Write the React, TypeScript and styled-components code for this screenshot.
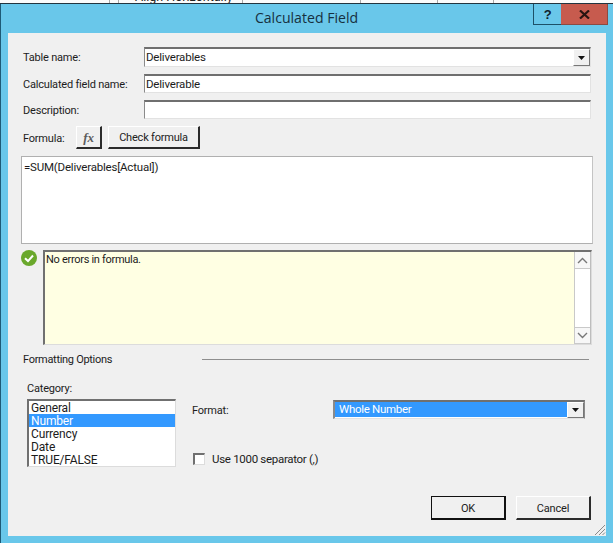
import React from "react";
import styled, { createGlobalStyle } from "styled-components";

const Global = createGlobalStyle`
  html, body { margin: 0; padding: 0; background: #69c7ea; }
  * { box-sizing: border-box; }
  #root { width: 613px; height: 543px; overflow: hidden; }
`;
const Page = styled.div`
  width: 613px; height: 543px; display: flex; flex-direction: column;
  font-family: Roboto, "Liberation Sans", Arial, sans-serif; font-size: 11px; letter-spacing: -0.2px; color: #1c1c1c;
  background: #69c7ea; overflow: hidden;
`;
const BehindStrip = styled.div`
  height: 4px; flex: none; display: flex; overflow: hidden; background: #fbfbfb;
  border-bottom: 1px solid #22343f;
`;
const BehindCell = styled.div<{ $w: number; $line?: boolean }>`
  width: ${(p) => p.$w}px; flex: none; height: 3px; overflow: hidden;
  border-right: ${(p) => (p.$line ? "1px solid #a8a8a8" : "none")};
`;
const BehindText = styled.div`
  font-size: 12.5px; letter-spacing: 0; line-height: 12px; margin-top: -9px; color: #222; white-space: nowrap; padding-left: 2px;
`;
const Frame = styled.div`
  flex: 1; display: flex; flex-direction: column;
  border-left: 1px solid #1e5a76;
  padding: 0 7px 7px 7px;
`;
const TitleBar = styled.div`
  height: 29px; flex: none; display: grid; grid-template-columns: 1fr auto 1fr; margin: 0 -2px 0 0;
`;
const Title = styled.div`
  grid-column: 2; font-family: "Open Sans", sans-serif; font-size: 14.1px; letter-spacing: 0; line-height: 28px; color: #16303f; padding-right: 3px;
`;
const Controls = styled.div`
  grid-column: 3; display: flex; justify-content: flex-end; align-items: flex-start;
`;
const HelpBtn = styled.div`
  width: 28px; height: 21px; border: 1px solid #1d5068; border-top: none; border-right: none;
  display: flex; align-items: center; justify-content: center;
  font: bold 13px "Liberation Sans", sans-serif; color: #10222c;
`;
const CloseBtn = styled.div`
  width: 47px; height: 21px; background: #c75b4e; border-bottom: 1px solid #8c4a42; border-right: 1px solid #8c4a42;
  display: flex; align-items: center; justify-content: center;
`;
const Body = styled.div`
  position: relative; flex: 1; background: #f0f0f0; padding: 14px 13px 0 13px; display: flex; flex-direction: column;
`;
const FieldRow = styled.div<{ $gap: number }>`
  display: grid; grid-template-columns: 121px 447px; padding-left: 2px; align-items: center; margin-bottom: ${(p) => p.$gap}px;
`;
const Label = styled.div`
  white-space: nowrap; padding-top: 1px;
`;
const Sunken = styled.div<{ $h: number }>`
  height: ${(p) => p.$h}px; background: #fff; border-top: 2px solid #6f6f6f; border-left: 1px solid #8a8a8a;
  border-right: 1px solid #e2e2e2; border-bottom: 1px solid #e2e2e2;
  display: flex; align-items: stretch; padding-left: 1px; line-height: 16px;
`;
const FieldText = styled.div`
  flex: 1; white-space: nowrap; font-size: 11.5px;
`;
const ComboButton = styled.div`
  width: 17px; margin: 0 0 0 auto; background: #f0f0f0; border-right: 1px solid #777; border-bottom: 1px solid #777;
  border-top: 1px solid #fff; border-left: 1px solid #fff;
  display: flex; align-items: center; justify-content: center; flex: none;
`;
const FormulaRow = styled.div`
  display: flex; align-items: center; padding-left: 2px; height: 23px; margin-bottom: 7px;
`;
const FormulaLabel = styled(Label)`
  width: 53px;
`;
const RaisedButton = styled.div<{ $w: number; $h?: number; $default?: boolean }>`
  width: ${(p) => p.$w}px; height: ${(p) => p.$h ?? 23}px; flex: none;
  background: #f0f0f0; display: flex; align-items: center; justify-content: center; padding-top: 1px;
  border-style: solid; border-width: 1px 2px 2px 1px;
  border-color: ${(p) => (p.$default ? "#111" : "#fff #2b2b2b #2b2b2b #fff")};
  font-size: 11px; color: #222;
`;
const FxButton = styled(RaisedButton)`
  margin-right: 6px; font: italic bold 13px "Liberation Serif", serif; color: #5c5c5c;
`;
const FormulaBox = styled.div`
  height: 88px; background: #fff; border: 1px solid #b0b0b0; border-right-color: #c4c4c4; padding: 3px 2px; margin-bottom: 6px;
  line-height: 14px; font-size: 11.5px;
`;
const StatusRow = styled.div`
  display: flex; align-items: flex-start; gap: 6px; margin-bottom: 7px; padding-right: 1px;
`;
const StatusIcon = styled.svg`
  width: 16px; height: 16px; flex: none;
`;
const StatusBox = styled.div`
  flex: 1; height: 95px; display: flex; background: #ffffe3; border-top: 2px solid #707070; border-left: 2px solid #707070;
  border-right: 1px solid #dcdcdc; border-bottom: 1px solid #dcdcdc;
`;
const StatusText = styled.div`
  flex: 1; padding: 1px 0 0 1px; line-height: 14px; letter-spacing: -0.3px;
`;
const Scrollbar = styled.div`
  width: 17px; flex: none; background: #fff; border-left: 1px solid #c9c9c9; border-right: 1px solid #bdbdbd; display: flex; flex-direction: column; justify-content: space-between;
`;
const ScrollArrow = styled.div<{ $up?: boolean }>`
  height: 17px; display: flex; align-items: center; justify-content: center; background: #f7f7f7;
  ${(p) => (p.$up ? "border-bottom: 1px solid #c9c9c9;" : "border-top: 1px solid #c9c9c9; border-bottom: 1px solid #c9c9c9;")}
`;
const SectionRow = styled.div`
  display: flex; align-items: center; height: 14px; padding-left: 2px; margin-bottom: 15px;
`;
const SectionLabel = styled.div`
  width: 179px; white-space: nowrap; letter-spacing: -0.3px;
`;
const Rule = styled.div`
  width: 387px; height: 1px; background: #8e8e8e; margin-top: 1px;
`;
const CategoryLabel = styled(Label)`
  padding-left: 6px; line-height: 13px; margin-bottom: 4px;
`;
const Columns = styled.div`
  display: flex; padding-left: 6px; height: 97px;
`;
const ListBox = styled.div`
  width: 149px; height: 68px; background: #fff; border-top: 2px solid #707070; border-left: 2px solid #707070;
  border-right: 1px solid #dcdcdc; border-bottom: 1px solid #dcdcdc; flex: none;
`;
const ListItem = styled.div<{ $selected?: boolean }>`
  height: 13px; line-height: 14px; padding-left: 2px; font-size: 12px; letter-spacing: -0.15px;
  background: ${(p) => (p.$selected ? "#3399ff" : "transparent")};
  color: ${(p) => (p.$selected ? "#fff" : "#1c1c1c")};
`;
const FormatColumn = styled.div`
  margin-left: 16px; flex: 1; display: flex; flex-direction: column;
`;
const FormatRow = styled.div`
  display: flex; align-items: center; height: 19px; margin-top: 1px;
`;
const FormatLabel = styled(Label)`
  width: 141px;
`;
const FormatCombo = styled.div`
  width: 252px; height: 19px; display: flex; background: #fff; border-top: 2px solid #707070; border-left: 2px solid #8a8a8a;
  border-right: 1px solid #8a8a8a; border-bottom: 1px solid #e2e2e2;
`;
const FormatValue = styled.div`
  flex: 1; background: #3399ff; color: #fff; padding-left: 4px; line-height: 15px; font-size: 11.5px; letter-spacing: -0.3px; margin-bottom: 1px;
`;
const CheckRow = styled.label`
  display: flex; align-items: center; gap: 7px; margin-top: 33px; padding-left: 1px; height: 13px; line-height: 16px; font-size: 11.5px; letter-spacing: -0.3px;
`;
const CheckBox = styled.span`
  width: 12px; height: 12px; background: #fff; border-top: 2px solid #707070; border-left: 2px solid #707070;
  border-right: 1px solid #dcdcdc; border-bottom: 1px solid #dcdcdc;
`;
const Footer = styled.div`
  display: flex; justify-content: flex-end; gap: 10px; padding-right: 2px;
`;
const Grip = styled.svg`
  position: absolute; right: 0; bottom: 0; width: 14px; height: 14px;
`;

const DownTriangle = () => (
  <svg width="7" height="4" viewBox="0 0 7 4"><path d="M0 0h7L3.5 4z" fill="#111" /></svg>
);
const Chevron = ({ up }: { up?: boolean }) => (
  <svg width="11" height="7" viewBox="0 0 11 7">
    <path d={up ? "M1 6l4.5-4.5L10 6" : "M1 1l4.5 4.5L10 1"} fill="none" stroke="#777" strokeWidth="1.4" />
  </svg>
);

export default function App() {
  return (
    <Page>
      <Global />
      <BehindStrip>
        <BehindCell $w={110} $line />
        <BehindCell $w={9} $line />
        <BehindCell $w={14} />
        <BehindCell $w={110} $line><BehindText>Align Horizontally</BehindText></BehindCell>
        <BehindCell $w={118} $line />
        <BehindCell $w={77} $line />
        <BehindCell $w={56} $line />
      </BehindStrip>
      <Frame>
        <TitleBar>
          <Title>Calculated Field</Title>
          <Controls>
            <HelpBtn>?</HelpBtn>
            <CloseBtn>
              <svg width="11" height="9" viewBox="0 0 11 9">
                <path d="M1 0.5l9 8M10 0.5l-9 8" stroke="#2a1512" strokeWidth="2.2" fill="none" />
              </svg>
            </CloseBtn>
          </Controls>
        </TitleBar>
        <Body>
          <FieldRow $gap={7}>
            <Label>Table name:</Label>
            <Sunken $h={20}>
              <FieldText>Deliverables</FieldText>
              <ComboButton><DownTriangle /></ComboButton>
            </Sunken>
          </FieldRow>
          <FieldRow $gap={7}>
            <Label>Calculated field name:</Label>
            <Sunken $h={19}><FieldText>Deliverable</FieldText></Sunken>
          </FieldRow>
          <FieldRow $gap={7}>
            <Label>Description:</Label>
            <Sunken $h={19}><FieldText /></Sunken>
          </FieldRow>
          <FormulaRow>
            <FormulaLabel>Formula:</FormulaLabel>
            <FxButton $w={26}>fx</FxButton>
            <RaisedButton $w={92}>Check formula</RaisedButton>
          </FormulaRow>
          <FormulaBox>=SUM(Deliverables[Actual])</FormulaBox>
          <StatusRow>
            <StatusIcon viewBox="0 0 16 16">
              <circle cx="8" cy="8" r="8" fill="#6aa82c" />
              <path d="M4 8.3l3 2.8 5-5.6" fill="none" stroke="#fff" strokeWidth="2" />
            </StatusIcon>
            <StatusBox>
              <StatusText>No errors in formula.</StatusText>
              <Scrollbar>
                <ScrollArrow $up><Chevron up /></ScrollArrow>
                <ScrollArrow><Chevron /></ScrollArrow>
              </Scrollbar>
            </StatusBox>
          </StatusRow>
          <SectionRow>
            <SectionLabel>Formatting Options</SectionLabel>
            <Rule />
          </SectionRow>
          <CategoryLabel>Category:</CategoryLabel>
          <Columns>
            <ListBox>
              <ListItem>General</ListItem>
              <ListItem $selected>Number</ListItem>
              <ListItem>Currency</ListItem>
              <ListItem>Date</ListItem>
              <ListItem>TRUE/FALSE</ListItem>
            </ListBox>
            <FormatColumn>
              <FormatRow>
                <FormatLabel>Format:</FormatLabel>
                <FormatCombo>
                  <FormatValue>Whole Number</FormatValue>
                  <ComboButton><DownTriangle /></ComboButton>
                </FormatCombo>
              </FormatRow>
              <CheckRow>
                <CheckBox />
                Use 1000 separator (,)
              </CheckRow>
            </FormatColumn>
          </Columns>
          <Footer>
            <RaisedButton $w={75} $h={24} $default>OK</RaisedButton>
            <RaisedButton $w={75} $h={24}>Cancel</RaisedButton>
          </Footer>
          <Grip viewBox="0 0 14 14">
            <path d="M13 3L3 13M13 7L7 13M13 10.5L10.5 13" stroke="#8a8a8a" strokeWidth="1" />
          </Grip>
        </Body>
      </Frame>
    </Page>
  );
}
